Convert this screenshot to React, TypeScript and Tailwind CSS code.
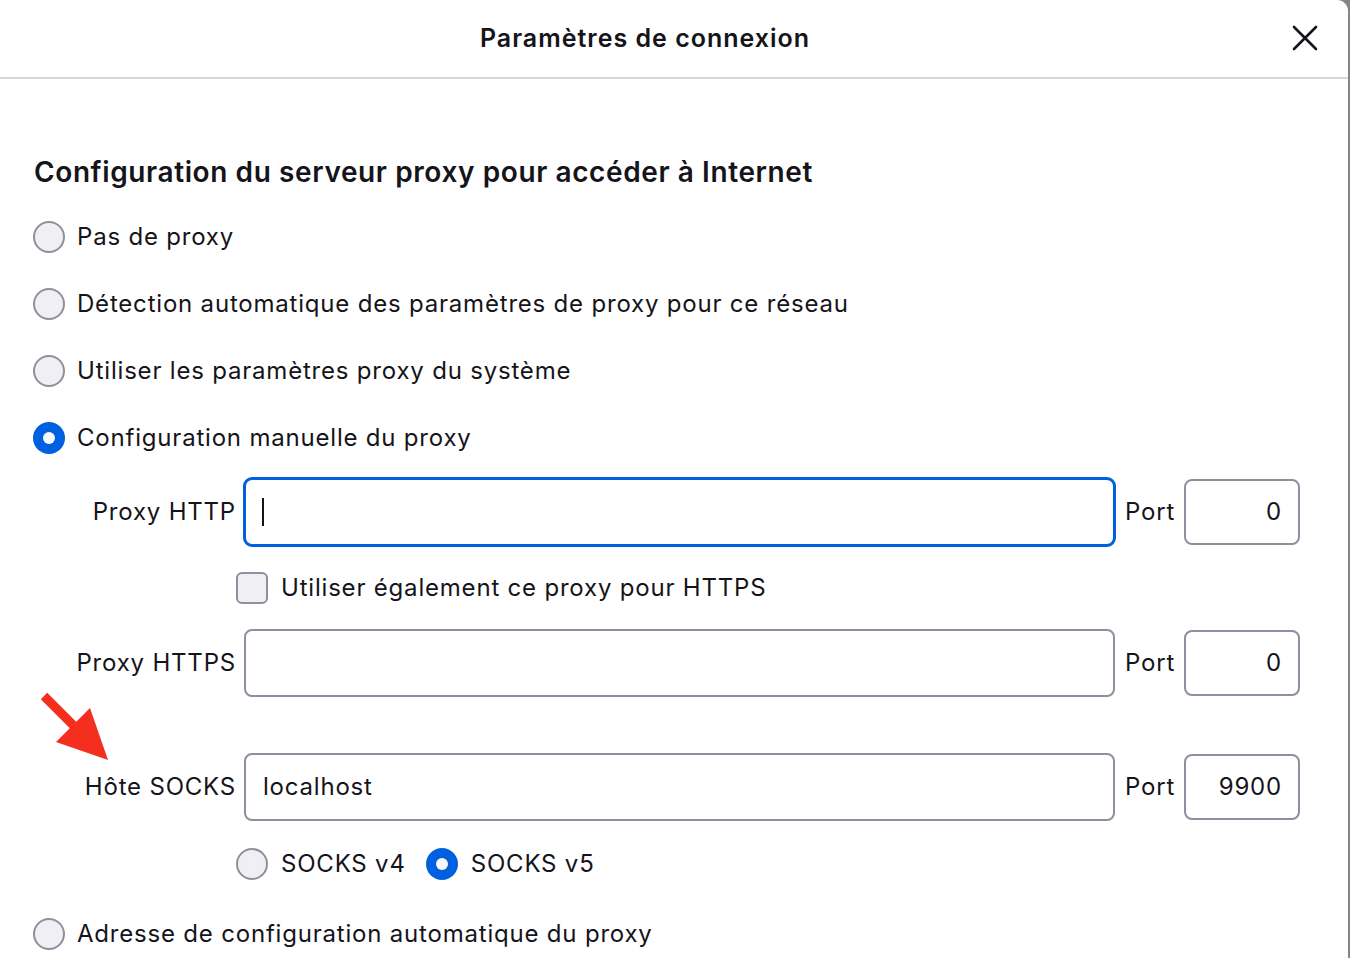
import React from "react";

const font = { fontFamily: "Inter, 'Noto Sans', 'Liberation Sans', sans-serif" };

function Radio({ checked }: { checked?: boolean }) {
  if (checked) {
    return (
      <div className="w-[32px] h-[32px] rounded-full bg-[#0061e0] flex items-center justify-center shrink-0">
        <div className="w-[12px] h-[12px] rounded-full bg-[#f9f9fb]" />
      </div>
    );
  }
  return <div className="w-[32px] h-[32px] rounded-full border-2 border-[#8f8f9d] bg-[#f0f0f4] shrink-0" />;
}

function RadioRow({ label, checked, h }: { label: string; checked?: boolean; h: string }) {
  return (
    <div className={`flex items-center gap-[12px] -ml-[1px] ${h}`}>
      <Radio checked={checked} />
      <span className="text-[24px] tracking-[0.8px]">{label}</span>
    </div>
  );
}

function Field({
  label,
  value,
  port,
  focused,
  h,
}: {
  label: string;
  value?: string;
  port: string;
  focused?: boolean;
  h: string;
}) {
  return (
    <div className={`flex items-center ${h}`}>
      <div className="w-[202px] text-right text-[24px] tracking-[0.8px] shrink-0">{label}</div>
      <div className="ml-[8px] flex-1 h-full">
        {focused ? (
          <div className="h-full -mx-[1px] border-[3px] border-[#0061e0] rounded-[9px] flex items-center pl-[16px]">
            <div className="w-[2px] h-[28px] bg-[#15141a]" />
          </div>
        ) : (
          <div className="h-full border-2 border-[#8f8f9d] rounded-[8px] flex items-center pl-[17px] text-[24px] tracking-[0.8px]">
            {value}
          </div>
        )}
      </div>
      <div className="ml-[10px] w-[50px] text-[24px] tracking-[0.8px]">Port</div>
      <div className="ml-[9px] w-[116px] h-[66px] border-2 border-[#8f8f9d] rounded-[8px] flex items-center justify-end pr-[16px] text-[24px] tracking-[0.8px]">
        {port}
      </div>
    </div>
  );
}

export default function App() {
  return (
    <div className="w-[1350px] h-[958px] bg-[#858585] overflow-hidden flex" style={font}>
      <div className="w-[1348px] h-full bg-white rounded-tr-[11px] text-[#15141a] relative">
        <div className="h-[79px] border-b-2 border-[#d8d8dc] flex items-center justify-center relative pr-[58px]">
          <span className="text-[25px] font-semibold tracking-[1px] mt-[0px]">Paramètres de connexion</span>
          <svg
            className="absolute left-[1292px] top-[25px]"
            width="26"
            height="26"
            viewBox="0 0 26 26"
          >
            <path d="M2 2 L24 24 M24 2 L2 24" stroke="#15141a" strokeWidth="2.6" strokeLinecap="round" />
          </svg>
        </div>

        <div className="pl-[34px] pr-[48px]">
          <div className="mt-[73px] h-[40px] flex items-center text-[28px] font-semibold tracking-[0.6px]">
            Configuration du serveur proxy pour accéder à Internet
          </div>
          <div className="mt-[12px]">
            <RadioRow label="Pas de proxy" h="h-[66px]" />
            <RadioRow label="Détection automatique des paramètres de proxy pour ce réseau" h="h-[67px]" />
            <RadioRow label="Utiliser les paramètres proxy du système" h="h-[67px]" />
            <RadioRow label="Configuration manuelle du proxy" checked h="h-[67px]" />
          </div>

          <div className="mt-[6px]">
            <Field label="Proxy HTTP" port="0" focused h="h-[70px]" />
          </div>
          <div className="h-[82px] flex items-center ml-[202px] gap-[13px]">
            <div className="w-[32px] h-[32px] rounded-[6px] border-2 border-[#8f8f9d] bg-[#f0f0f4] shrink-0" />
            <span className="text-[24px] tracking-[0.8px]">Utiliser également ce proxy pour HTTPS</span>
          </div>
          <Field label="Proxy HTTPS" port="0" h="h-[68px]" />
          <div className="mt-[56px]">
            <Field label="Hôte SOCKS" value="localhost" port="9900" h="h-[68px]" />
          </div>
          <div className="mt-[10px] h-[66px] flex items-center ml-[202px]">
            <Radio />
            <span className="ml-[13px] text-[24px] tracking-[0.8px]">SOCKS v4</span>
            <div className="ml-[20px]">
              <Radio checked />
            </div>
            <span className="ml-[13px] text-[24px] tracking-[0.8px]">SOCKS v5</span>
          </div>
          <RadioRow label="Adresse de configuration automatique du proxy" h="h-[74px]" />
        </div>

        <svg className="absolute left-[36px] top-[690px]" width="78" height="76" viewBox="0 0 78 76">
          <line x1="8" y1="6" x2="44" y2="42" stroke="#f42f20" strokeWidth="9" strokeLinecap="butt" />
          <polygon points="72,70 20,52 54,18" fill="#f42f20" />
        </svg>
      </div>
    </div>
  );
}
